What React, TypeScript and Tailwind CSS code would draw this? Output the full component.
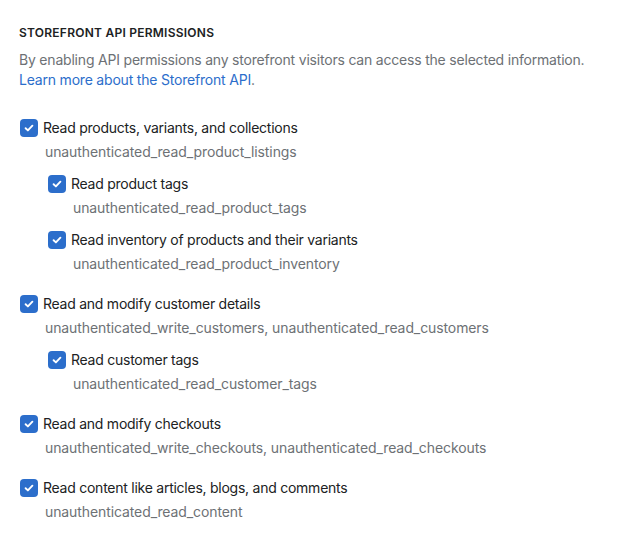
import React from "react";

type Item = { label: string; code: string; children?: Item[] };

const items: Item[] = [
  {
    label: "Read products, variants, and collections",
    code: "unauthenticated_read_product_listings",
    children: [
      { label: "Read product tags", code: "unauthenticated_read_product_tags" },
      {
        label: "Read inventory of products and their variants",
        code: "unauthenticated_read_product_inventory",
      },
    ],
  },
  {
    label: "Read and modify customer details",
    code: "unauthenticated_write_customers, unauthenticated_read_customers",
    children: [
      { label: "Read customer tags", code: "unauthenticated_read_customer_tags" },
    ],
  },
  {
    label: "Read and modify checkouts",
    code: "unauthenticated_write_checkouts, unauthenticated_read_checkouts",
  },
  {
    label: "Read content like articles, blogs, and comments",
    code: "unauthenticated_read_content",
  },
];

function Check() {
  return (
    <span className="flex h-[18px] w-[18px] shrink-0 items-center justify-center rounded-[4px] bg-[#2c6ecb]">
      <svg width="12" height="12" viewBox="0 0 12 12" fill="none">
        <path
          d="M2.6 6.2 L4.9 8.4 L9.4 3.7"
          stroke="white"
          strokeWidth="1.9"
          strokeLinecap="round"
          strokeLinejoin="round"
        />
      </svg>
    </span>
  );
}

function Row({ item }: { item: Item }) {
  return (
    <div>
      <div className="flex h-5 items-center gap-[5px]">
        <Check />
        <span className="whitespace-nowrap text-[14px] leading-5 tracking-[-0.25px] text-[#202223]">
          {item.label}
        </span>
      </div>
      <div className="mt-1 whitespace-nowrap pl-[25px] text-[14px] leading-5 tracking-[-0.1px] text-[#6d7175]">
        {item.code}
      </div>
      {item.children && (
        <div className="mt-3 flex flex-col gap-3 pl-[28px]">
          {item.children.map((c) => (
            <Row key={c.label} item={c} />
          ))}
        </div>
      )}
    </div>
  );
}

export default function App() {
  return (
    <div
      className="min-h-[542px] w-[619px] bg-white pl-[19px] pr-[10px] pt-[23px]"
      style={{ fontFamily: "Inter, 'Noto Sans', sans-serif" }}
    >
      <h2 className="text-[12px] font-semibold uppercase leading-5 tracking-[0.02em] text-[#202223]">
        Storefront API permissions
      </h2>
      <p className="mt-[7px] text-[14px] leading-5 tracking-[-0.2px] text-[#6d7175]">
        <span className="block whitespace-nowrap">
          By enabling API permissions any storefront visitors can access the selected information.
        </span>
        <a className="text-[#2c6ecb]">Learn more about the Storefront API</a>.
      </p>
      <div className="mt-[28px] flex flex-col gap-5 pl-px">
        {items.map((it) => (
          <Row key={it.label} item={it} />
        ))}
      </div>
    </div>
  );
}
